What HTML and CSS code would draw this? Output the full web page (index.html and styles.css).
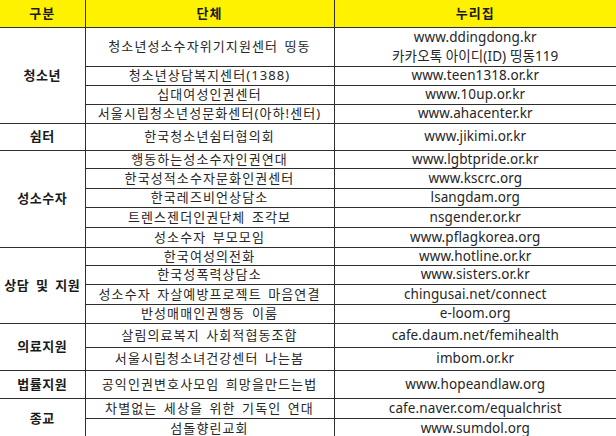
FILE: index.html
```html
<!DOCTYPE html>
<html lang="ko">
<head>
<meta charset="utf-8">
<title>성소수자 지원 단체</title>
<link rel="stylesheet" href="styles.css">
</head>
<body>
<table class="orgs">
  <colgroup>
    <col class="c-cat">
    <col class="c-org">
    <col class="c-url">
  </colgroup>
  <thead>
    <tr class="h27 head">
      <th>구분</th>
      <th>단체</th>
      <th>누리집</th>
    </tr>
  </thead>
  <tbody>
    <tr class="h39">
      <td class="cat" rowspan="4">청소년</td>
      <td class="org">청소년성소수자위기지원센터 띵동</td>
      <td class="url two">www.ddingdong.kr<br>카카오톡 아이디(ID) 띵동119</td>
    </tr>
    <tr class="h19"><td class="org">청소년상담복지센터(1388)</td><td class="url">www.teen1318.or.kr</td></tr>
    <tr class="h19"><td class="org">십대여성인권센터</td><td class="url">www.10up.or.kr</td></tr>
    <tr class="h19"><td class="org">서울시립청소년성문화센터(아하!센터)</td><td class="url">www.ahacenter.kr</td></tr>

    <tr class="h27">
      <td class="cat">쉼터</td>
      <td class="org">한국청소년쉼터협의회</td>
      <td class="url">www.jikimi.or.kr</td>
    </tr>

    <tr class="h18">
      <td class="cat" rowspan="5">성소수자</td>
      <td class="org">행동하는성소수자인권연대</td>
      <td class="url">www.lgbtpride.or.kr</td>
    </tr>
    <tr class="h20"><td class="org">한국성적소수자문화인권센터</td><td class="url">www.kscrc.org</td></tr>
    <tr class="h19"><td class="org">한국레즈비언상담소</td><td class="url">lsangdam.org</td></tr>
    <tr class="h20"><td class="org">트렌스젠더인권단체 조각보</td><td class="url">nsgender.or.kr</td></tr>
    <tr class="h20"><td class="org">성소수자 부모모임</td><td class="url">www.pflagkorea.org</td></tr>

    <tr class="h18">
      <td class="cat" rowspan="4">상담 및 지원</td>
      <td class="org">한국여성의전화</td>
      <td class="url">www.hotline.or.kr</td>
    </tr>
    <tr class="h19"><td class="org">한국성폭력상담소</td><td class="url">www.sisters.or.kr</td></tr>
    <tr class="h20"><td class="org">성소수자 자살예방프로젝트 마음연결</td><td class="url">chingusai.net/connect</td></tr>
    <tr class="h19"><td class="org">반성매매인권행동 이룸</td><td class="url">e-loom.org</td></tr>

    <tr class="h24">
      <td class="cat" rowspan="2">의료지원</td>
      <td class="org">살림의료복지 사회적협동조합</td>
      <td class="url">cafe.daum.net/femihealth</td>
    </tr>
    <tr class="h23"><td class="org">서울시립청소녀건강센터 나는봄</td><td class="url">imbom.or.kr</td></tr>

    <tr class="h28">
      <td class="cat">법률지원</td>
      <td class="org">공익인권변호사모임 희망을만드는법</td>
      <td class="url">www.hopeandlaw.org</td>
    </tr>

    <tr class="h20">
      <td class="cat" rowspan="2">종교</td>
      <td class="org">차별없는 세상을 위한 기독인 연대</td>
      <td class="url">cafe.naver.com/equalchrist</td>
    </tr>
    <tr class="h20"><td class="org">섬돌향린교회</td><td class="url">www.sumdol.org</td></tr>
  </tbody>
</table>
</body>
</html>
```

FILE: styles.css
```css
html, body {
  margin: 0;
  padding: 0;
  background: #ffffff;
}

body {
  width: 616px;
  height: 436px;
  overflow: hidden;
  font-family: "Noto Sans", "Noto Sans CJK KR", sans-serif;
  color: #262626;
}

.orgs {
  width: 616px;
  border-collapse: collapse;
  table-layout: fixed;
}

.c-cat { width: 85px; }
.c-org { width: 249px; }
.c-url { width: 282px; }

.orgs th,
.orgs td {
  padding: 0;
  text-align: center;
  vertical-align: middle;
  font-size: 13px;
  line-height: 17px;
  font-weight: 400;
  border: 1px solid #2e2e2e;
  white-space: nowrap;
  overflow: hidden;
}

.orgs tr > :first-child { border-left: none; }
.orgs tr > :last-child { border-right: none; }
.orgs thead th { border-top: none; }

.head th {
  background: #fff200;
  font-weight: 700;
  color: #1a1a1a;
  letter-spacing: 1px;
}

.orgs td.cat {
  font-weight: 700;
  color: #1a1a1a;
  letter-spacing: 0.5px;
  word-spacing: 3px;
}

.orgs td.org {
  letter-spacing: 1.1px;
  word-spacing: 2px;
}

.orgs td.url {
  font-size: 13.5px;
  letter-spacing: 0.1px;
}

.orgs td.url.two {
  line-height: 18.5px;
}

.h18 { height: 18px; }
.h19 { height: 19px; }
.h20 { height: 20px; }
.h23 { height: 23px; }
.h24 { height: 24px; }
.h27 { height: 27px; }
.h28 { height: 28px; }
.h39 { height: 39px; }
```
